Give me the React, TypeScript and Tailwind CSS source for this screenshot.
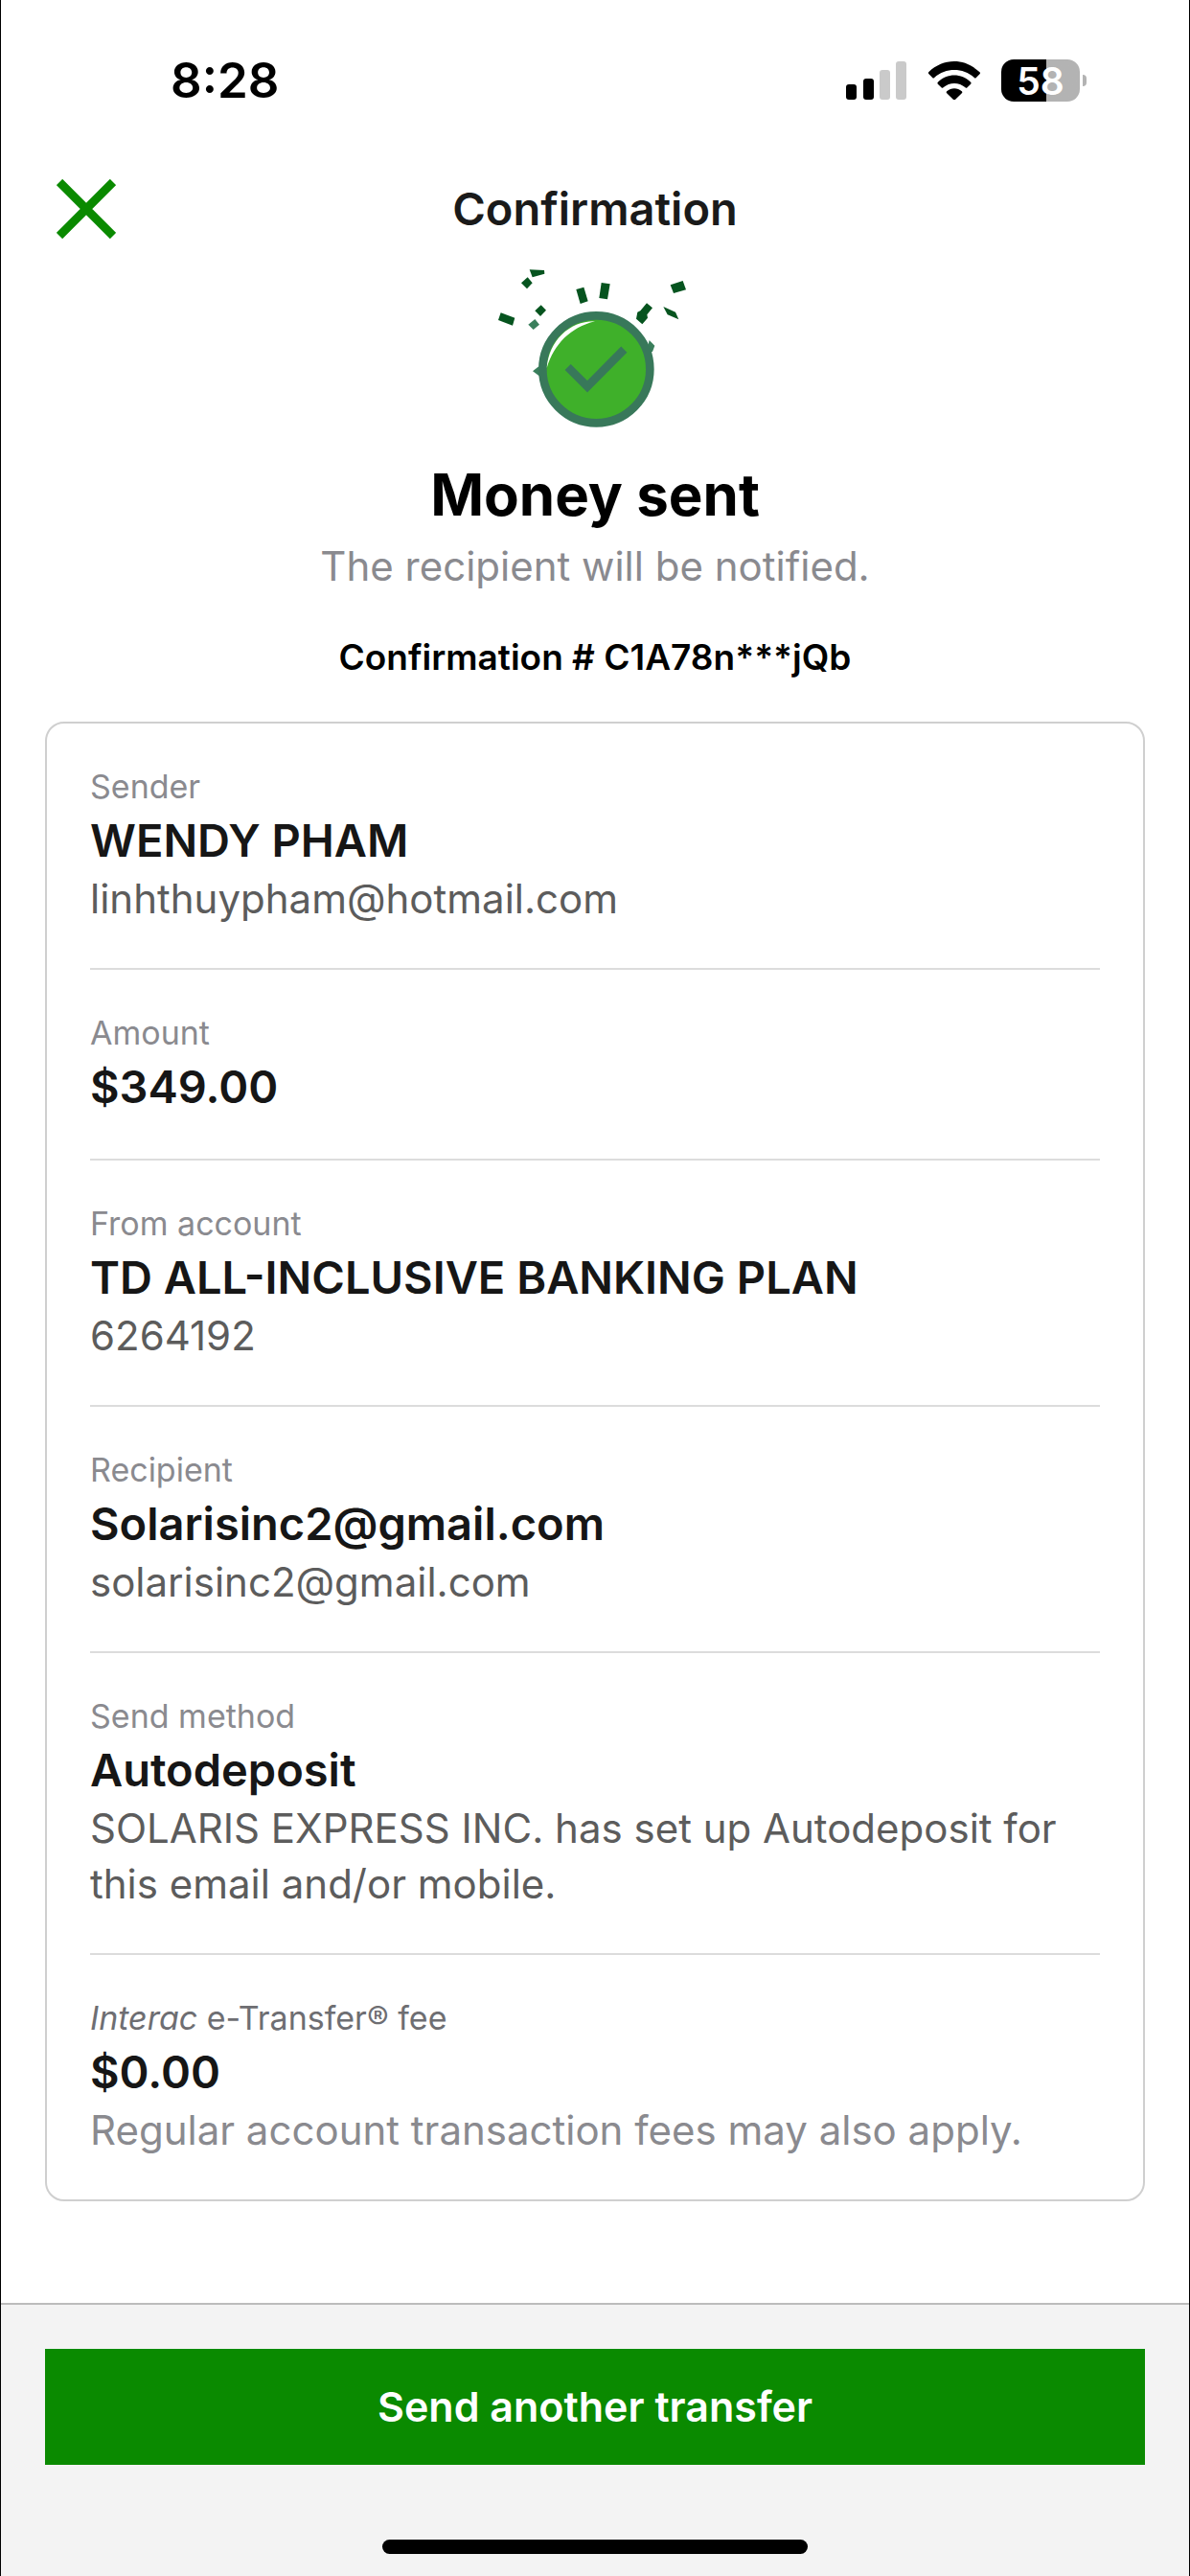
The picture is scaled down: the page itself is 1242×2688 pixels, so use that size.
import type { ReactNode } from 'react';

type Detail = {
  id: string;
  label: ReactNode;
  value: string;
  note?: string;
  muted?: boolean;
};

const details: Detail[] = [
  { id: 'sender', label: 'Sender', value: 'WENDY PHAM', note: 'linhthuypham@hotmail.com' },
  { id: 'amount', label: 'Amount', value: '$349.00' },
  { id: 'account', label: 'From account', value: 'TD ALL-INCLUSIVE BANKING PLAN', note: '6264192' },
  { id: 'recipient', label: 'Recipient', value: 'Solarisinc2@gmail.com', note: 'solarisinc2@gmail.com' },
  {
    id: 'method',
    label: 'Send method',
    value: 'Autodeposit',
    note: 'SOLARIS EXPRESS INC. has set up Autodeposit for this email and/or mobile.',
  },
  {
    id: 'fee',
    label: (
      <span className="text-[#6e6e72]">
        <em>Interac</em> e-Transfer® fee
      </span>
    ),
    value: '$0.00',
    note: 'Regular account transaction fees may also apply.',
    muted: true,
  },
];

function StatusBar() {
  return (
    <div className="flex items-center justify-between pt-[52px] pr-[107px] pl-[177px]">
      <span className="text-[51px] leading-[64px] font-semibold text-black">8:28</span>
      <div className="flex items-center">
        {/* Signal */}
        <svg className="mr-[21px] h-10 w-16" viewBox="0 0 64 40" aria-hidden="true">
          <rect x="0" y="24" width="11" height="16" rx="3" fill="#000" />
          <rect x="18" y="18" width="11" height="22" rx="3" fill="#000" />
          <rect x="35" y="9" width="11" height="31" rx="3" fill="#cacaca" />
          <rect x="52" y="0" width="11" height="40" rx="3" fill="#cacaca" />
        </svg>
        {/* Wifi */}
        <svg className="mr-[21px] h-10 w-14" viewBox="0 0 165 120" aria-hidden="true">
          <path d="M2 34Q0 37 3 40L14 51Q17 54 20 51C56 19 109 19 145 51Q148 54 151 51L162 40Q165 37 162 34C116 -11 48 -11 2 34Z" />
          <path d="M31 65Q28 68 31 71L42 82Q45 85 48 82C68 65 97 65 117 82Q120 85 123 82L134 71Q137 68 134 65C104 36 61 36 31 65Z" />
          <path d="M59 94Q56 97 59 100L79 119Q82 122 86 119L106 100Q109 97 106 94C92 82 73 82 59 94Z" />
        </svg>
        {/* Battery */}
        <div className="flex items-center gap-[3px]">
          <div className="flex h-11 w-[82px] items-center justify-center rounded-[13px] bg-linear-to-r from-black from-57% to-[#b3b3b3] to-57%">
            <span className="text-[39px] leading-none font-semibold text-white">58</span>
          </div>
          <div className="h-3 w-1 rounded-r-full bg-[#b3b3b3]" />
        </div>
      </div>
    </div>
  );
}

function SuccessArt() {
  return (
    <svg className="mx-auto mt-[10px] h-[200px] w-[260px]" viewBox="0 0 780 600" aria-hidden="true">
      {/* Confetti */}
      <g fill="#06541f">
        <path d="M185 64L231 66L232 77L194 88Z" />
        <path d="M179 88L194 106L177 124L159 106Z" />
        <path d="M95 199L139 215L132 239L87 222Z" />
        <path d="M221 175L237 191L219 210L202 193Z" />
        <path d="M331 126L355 119L368 163L344 171Z" />
        <path d="M410 105L437 109L429 157L403 153Z" />
        <path d="M626 112L665 99L675 127L636 138Z" />
        <path d="M604 180L642 197L652 220L617 205Z" />
        <path d="M552 169L570 184L553 205L555 215L538 235L519 218L523 197L532 193Z" />
      </g>
      <g fill="#3a7f5c">
        <path d="M202 219L216 236L197 252L181 236Z" />
        <path d="M560 285L577 302L570 321L550 326Z" />
        <path d="M195 382L214 367L218 399Z" />
      </g>
      <circle cx="394" cy="376" r="168" fill="#3fb02a" stroke="#38785a" strokeWidth="26" />
      <path d="M239 372C246 285 312 224 390 226C312 246 263 296 239 372Z" fill="#fff" />
      <path d="M305 369L366 430L481 314" fill="none" stroke="#38785a" strokeWidth="26" />
    </svg>
  );
}

export default function App() {
  return (
    <main
      className="flex min-h-screen flex-col border-x border-black bg-white"
      style={{ fontFamily: 'Inter, "Liberation Sans", sans-serif' }}
    >
      <StatusBar />

      <header className="mt-[70px] grid grid-cols-[1fr_auto_1fr] items-center px-[58px]">
        <button type="button" aria-label="Close" className="w-[62px]">
          <svg className="h-[62px] w-[62px]" viewBox="0 0 62 62" aria-hidden="true">
            <path d="M3 3L59 59M59 3L3 59" stroke="#0a8a00" strokeWidth="9" />
          </svg>
        </button>
        <span className="text-[47px] leading-[64px] font-semibold text-[#1a1a1a]">Confirmation</span>
      </header>

      <section className="text-center">
        <SuccessArt />
        <h1 className="mt-4 text-[60px] leading-[80px] font-bold text-black">Money sent</h1>
        <p className="mt-[6px] text-[42px] leading-[58px] text-[#8a8a8f]">The recipient will be notified.</p>
        <p className="mt-[42px] text-[37px] leading-[48px] font-semibold text-black">
          Confirmation # C1A78n***jQb
        </p>
      </section>

      <dl className="mx-[46px] mt-[43px] divide-y-2 divide-[#dcdcdc] rounded-[20px] border-2 border-[#cfcfcf] px-[45px]">
        {details.map((item) => (
          <div key={item.id} className="pt-[42px] pb-[43px]">
            <dt className="text-[34px] leading-[48px] text-[#8a8a8f]">{item.label}</dt>
            <dd className="text-[47px] leading-[64px] font-semibold text-[#161616]">{item.value}</dd>
            {item.note && (
              <dd className={item.muted ? 'text-[42px] leading-[58px] text-[#8a8a8f]' : 'text-[42px] leading-[58px] text-[#5c5c5c]'}>
                {item.note}
              </dd>
            )}
          </div>
        ))}
      </dl>

      <footer className="mt-auto border-t-2 border-[#bcbcbc] bg-[#f3f3f3] px-[46px] pt-[46px] pb-[23px]">
        <button type="button" className="h-[121px] w-full bg-[#0a8a00] text-[43px] font-semibold text-white">
          Send another transfer
        </button>
        <div className="mx-auto mt-[78px] h-[15px] w-[444px] rounded-full bg-black" />
      </footer>
    </main>
  );
}
